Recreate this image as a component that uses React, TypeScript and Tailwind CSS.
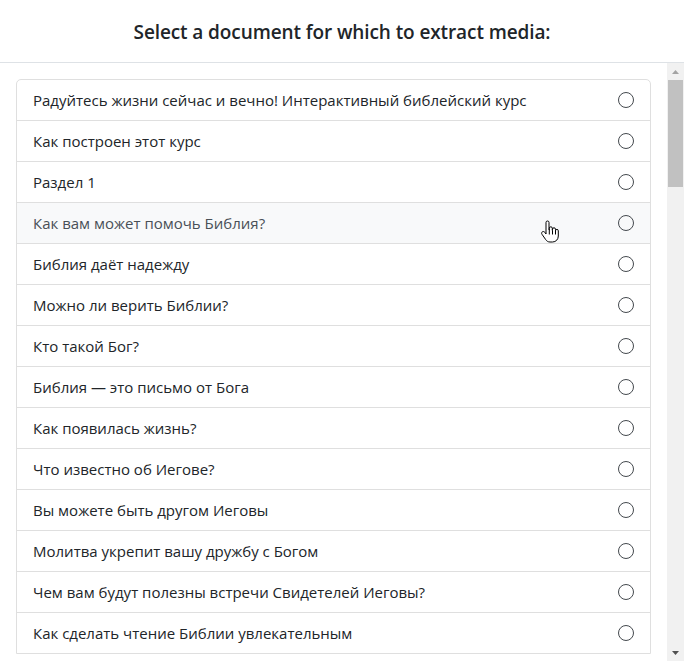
import { useState } from 'react';

const DOCUMENTS = [
  'Радуйтесь жизни сейчас и вечно! Интерактивный библейский курс',
  'Как построен этот курс',
  'Раздел 1',
  'Как вам может помочь Библия?',
  'Библия даёт надежду',
  'Можно ли верить Библии?',
  'Кто такой Бог?',
  'Библия — это письмо от Бога',
  'Как появилась жизнь?',
  'Что известно об Иегове?',
  'Вы можете быть другом Иеговы',
  'Молитва укрепит вашу дружбу с Богом',
  'Чем вам будут полезны встречи Свидетелей Иеговы?',
  'Как сделать чтение Библии увлекательным',
];

function HandCursor() {
  return (
    <svg width="20" height="24" viewBox="0 0 20 24" className="absolute left-[540px] top-[220px] pointer-events-none">
      <path
        d="M6 2.5a1.5 1.5 0 0 1 3 0V10h.3V8.3a1.5 1.5 0 0 1 3 0V10.5h.2V9.3a1.5 1.5 0 0 1 3 0v1.5a1.4 1.4 0 0 1 2.8 0v5.2c0 3.3-2.3 6-5.8 6H10c-2 0-3.2-.9-4.3-2.4L2 14.3c-.7-1-.4-2 .4-2.5.8-.5 1.8-.3 2.4.5L6 14V2.5z"
        fill="#fff"
        stroke="#000"
        strokeWidth="1"
        strokeLinejoin="round"
      />
      <path d="M9.3 10v4.5M12.5 10.5v4M15.5 11v3.5" stroke="#000" strokeWidth="1" />
    </svg>
  );
}

export default function App() {
  const [selected, setSelected] = useState<number | null>(null);
  const hovered = 3;

  return (
    <div className="relative w-[684px] h-[661px] bg-white flex flex-col overflow-hidden text-[#212529] font-['Open_Sans','Noto_Sans',sans-serif]">
      <div className="h-[63px] shrink-0 border-b border-[#dee2e6] flex items-center justify-center">
        <h5 className="text-[19px] font-semibold tracking-[-0.1px] mt-[3px]">Select a document for which to extract media:</h5>
      </div>

      <div className="flex-1 flex min-h-0">
        <div className="flex-1 pl-4 pr-[16px] pt-4 overflow-hidden">
          <ul className="border border-[#dfdfdf] rounded-t-[5px] text-[15px]">
            {DOCUMENTS.map((title, i) => (
              <li
                key={title}
                onClick={() => setSelected(i)}
                className={`h-[40px] box-content flex items-center justify-between pl-4 pr-4 cursor-pointer ${
                  i > 0 ? 'border-t border-[#dfdfdf]' : ''
                } ${i === hovered ? 'bg-[#f8f9fa] text-[#495057]' : ''}`}
              >
                <span>{title}</span>
                <span className="w-4 h-4 rounded-full border-[1.5px] border-[#44494e] flex items-center justify-center">
                  {selected === i && <span className="w-2 h-2 rounded-full bg-[#0d6efd]" />}
                </span>
              </li>
            ))}
          </ul>
        </div>

        <div className="w-[17px] shrink-0 bg-[#f1f1f1] flex flex-col items-center">
          <div className="h-[17px] flex items-center justify-center text-[#a3a3a3]">
            <svg width="7" height="4" viewBox="0 0 7 4"><path d="M3.5 0L7 4H0z" fill="currentColor" /></svg>
          </div>
          <div className="w-[15px] h-[107px] bg-[#c1c1c1]" />
          <div className="flex-1" />
          <div className="h-[17px] flex items-center justify-center text-[#505050]">
            <svg width="7" height="4" viewBox="0 0 7 4"><path d="M0 0h7L3.5 4z" fill="currentColor" /></svg>
          </div>
        </div>
      </div>

      <HandCursor />
    </div>
  );
}
